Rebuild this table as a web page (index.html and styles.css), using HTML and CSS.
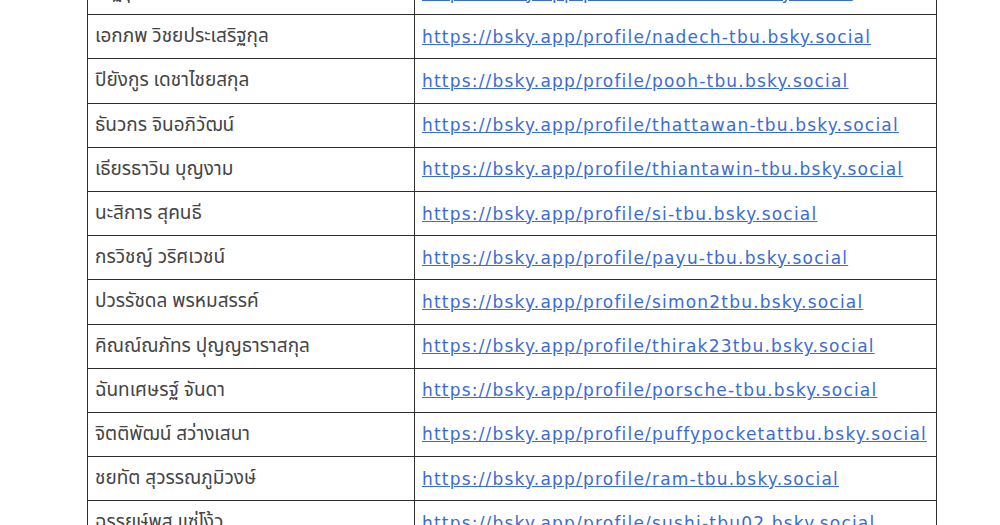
FILE: index.html
```html
<!DOCTYPE html>
<html lang="th">
<head>
<meta charset="utf-8">
<title>Bluesky profiles</title>
<link rel="stylesheet" href="styles.css">
</head>
<body>
<table class="list">
  <tr><td class="name">ณัฐวุฒิ ศรีหมอก</td><td class="link"><a href="#">https://bsky.app/profile/earth-tbu.bsky.social</a></td></tr>
  <tr><td class="name">เอกภพ วิชยประเสริฐกุล</td><td class="link"><a href="#">https://bsky.app/profile/nadech-tbu.bsky.social</a></td></tr>
  <tr><td class="name">ปิยังกูร เดชาไชยสกุล</td><td class="link"><a href="#">https://bsky.app/profile/pooh-tbu.bsky.social</a></td></tr>
  <tr><td class="name">ธันวกร จินอภิวัฒน์</td><td class="link"><a href="#">https://bsky.app/profile/thattawan-tbu.bsky.social</a></td></tr>
  <tr><td class="name">เธียรธาวิน บุญงาม</td><td class="link"><a href="#">https://bsky.app/profile/thiantawin-tbu.bsky.social</a></td></tr>
  <tr><td class="name">นะสิการ สุคนธี</td><td class="link"><a href="#">https://bsky.app/profile/si-tbu.bsky.social</a></td></tr>
  <tr><td class="name">กรวิชญ์ วริศเวชน์</td><td class="link"><a href="#">https://bsky.app/profile/payu-tbu.bsky.social</a></td></tr>
  <tr><td class="name">ปวรรัชดล พรหมสรรค์</td><td class="link"><a href="#">https://bsky.app/profile/simon2tbu.bsky.social</a></td></tr>
  <tr><td class="name">คิณณ์ณภัทร ปุญญธาราสกุล</td><td class="link"><a href="#">https://bsky.app/profile/thirak23tbu.bsky.social</a></td></tr>
  <tr><td class="name">ฉันทเศษรฐ์ จันดา</td><td class="link"><a href="#">https://bsky.app/profile/porsche-tbu.bsky.social</a></td></tr>
  <tr><td class="name">จิตติพัฒน์ สว่างเสนา</td><td class="link"><a href="#">https://bsky.app/profile/puffypocketattbu.bsky.social</a></td></tr>
  <tr><td class="name">ชยทัต สุวรรณภูมิวงษ์</td><td class="link"><a href="#">https://bsky.app/profile/ram-tbu.bsky.social</a></td></tr>
  <tr><td class="name">ฉรรยษ์พส แซ่โง้ว</td><td class="link"><a href="#">https://bsky.app/profile/sushi-tbu02.bsky.social</a></td></tr>
</table>
</body>
</html>
```

FILE: styles.css
```css
html, body {
  margin: 0;
  padding: 0;
  background: #ffffff;
  overflow: hidden;
}
body {
  height: 525px;
}
.list {
  border-collapse: collapse;
  margin: -30px 0 0 87px;
  table-layout: fixed;
  width: 850px;
}
.list tr {
  height: 44.2px;
}
.list td {
  border: 1.5px solid #2e2e2e;
  padding: 0 0 0 7px;
  vertical-align: middle;
  white-space: nowrap;
  overflow: hidden;
}
.list .name {
  width: 319px;
  font-family: "Noto Sans", "Noto Sans Thai", "Liberation Sans", sans-serif;
  font-size: 19px;
  color: #444444;
}
.list .link {
  font-family: "DejaVu Sans", sans-serif;
  font-size: 17px;
  letter-spacing: 1.2px;
}
.list .link a {
  color: #3a6cd2;
  text-decoration: underline;
}
```
